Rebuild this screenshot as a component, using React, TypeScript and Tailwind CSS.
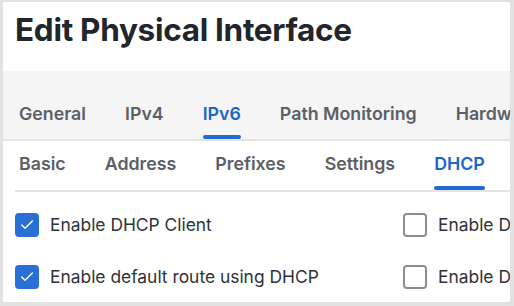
import { Check } from 'lucide-react';

const mainTabs = ['General', 'IPv4', 'IPv6', 'Path Monitoring', 'Hardware'];
const subTabs = ['Basic', 'Address', 'Prefixes', 'Settings', 'DHCP'];

function Box({ checked, label }: { checked: boolean; label: string }) {
  return (
    <label className="flex items-center gap-[11px] whitespace-nowrap">
      {checked ? (
        <span className="flex h-[24px] w-[24px] shrink-0 items-center justify-center rounded-[4px] bg-[#2a6fd5]">
          <Check size={16} strokeWidth={2.2} className="text-white" />
        </span>
      ) : (
        <span className="h-[24px] w-[24px] shrink-0 rounded-[4px] border-2 border-[#8a8d91] bg-white" />
      )}
      <span className="text-[17.4px] text-[#2f3237]">{label}</span>
    </label>
  );
}

export default function App() {
  return (
    <div
      className="h-[306px] w-[514px] overflow-hidden bg-[#e2e2e2] pb-[4px] pl-[3px] pr-[4px] pt-[2px]"
      style={{ fontFamily: 'Inter, "Noto Sans", sans-serif' }}
    >
      <div className="flex h-full flex-col overflow-hidden bg-white">
        <div className="h-[69px] shrink-0 pl-[12px] pt-[9px]">
          <h1 className="whitespace-nowrap text-[31.5px] font-bold leading-[38px] tracking-[-0.3px] text-[#22252a]">
            Edit Physical Interface
          </h1>
        </div>

        <div className="flex h-[70px] shrink-0 items-end gap-[31px] overflow-hidden border-b-2 border-[#e4e4e4] bg-[#f5f5f5] pl-[12px]">
          {mainTabs.map((t) => (
            <div key={t} className="flex shrink-0 flex-col items-center whitespace-nowrap px-1">
              <span
                className={
                  'text-[17.8px] font-semibold leading-[22px] ' +
                  (t === 'IPv6' ? 'text-[#1c64cc]' : 'text-[#5b6067]')
                }
              >
                {t}
              </span>
              <span
                className={
                  'mt-[10px] h-[4px] w-full rounded-full ' + (t === 'IPv6' ? 'bg-[#1f6ad3]' : 'bg-transparent')
                }
              />
            </div>
          ))}
        </div>

        <div className="ml-[12px] flex h-[51px] shrink-0 items-end gap-[31px] overflow-hidden border-b-2 border-[#e4e4e4]">
          {subTabs.map((t) => (
            <div key={t} className="flex shrink-0 flex-col items-center whitespace-nowrap px-1">
              <span
                className={
                  'text-[17.8px] font-semibold leading-[22px] ' +
                  (t === 'DHCP' ? 'text-[#1c64cc]' : 'text-[#5b6067]')
                }
              >
                {t}
              </span>
              <span
                className={
                  'mt-[11px] h-[4px] w-full rounded-full ' + (t === 'DHCP' ? 'bg-[#1f6ad3]' : 'bg-transparent')
                }
              />
            </div>
          ))}
        </div>

        <div className="grid grid-cols-[388px_1fr] gap-y-[26px] overflow-hidden pl-[12px] pt-[20px]">
          <Box checked label="Enable DHCP Client" />
          <Box checked={false} label="Enable DHCP Options" />
          <Box checked label="Enable default route using DHCP" />
          <Box checked={false} label="Enable DHCP Rapid Commit" />
        </div>
      </div>
    </div>
  );
}
